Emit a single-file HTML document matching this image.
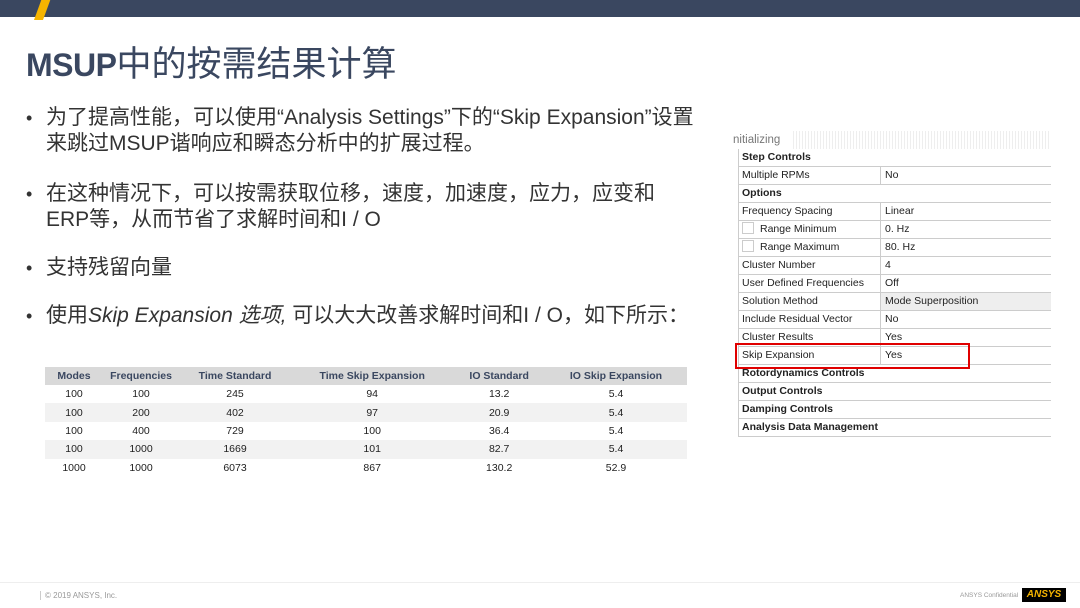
<!DOCTYPE html><html><head><meta charset="utf-8"><style>
body{margin:0;width:1080px;height:608px;position:relative;background:#fff;font-family:"Liberation Sans","Noto Sans CJK SC",sans-serif;overflow:hidden}
.top{position:absolute;left:0;top:0;width:1080px;height:17px;background:#3a4760}
.sl{position:absolute;left:38px;top:-2px;width:9px;height:22px;background:#f5b400;transform:skewX(-20deg)}
h1{position:absolute;left:26px;top:36px;margin:0;font-size:32px;font-weight:bold;color:#3a4760;letter-spacing:-0.5px;white-space:nowrap}
h1 span{font-weight:normal;font-size:35px;letter-spacing:0}
.b{position:absolute;left:26px;font-size:21px;color:#333;line-height:26px;white-space:nowrap}
.b i{font-style:italic}
.b .d{position:absolute;left:0;font-size:18px}
.b div{padding-left:20px}
table.t{position:absolute;left:45px;top:367px;width:642px;border-collapse:collapse;font-size:10.5px;color:#222;text-align:center}
.t th{background:#d9d9d9;color:#3a4760;height:18px;padding:0;font-weight:bold}
.t td{height:18.4px;padding:0}
.t tr:nth-child(odd) td{background:#f2f2f2}
.p{position:absolute;left:733px;top:131px;width:318px;font-size:10.5px;color:#222}
.p .h{height:18px;line-height:18px;color:#777;font-size:11.5px;background:repeating-linear-gradient(90deg,#fff 0 2px,#eee 2px 3px) 58px 0/100% 100% no-repeat}
.p .h span{background:#fff;padding-right:2px}
.r{height:17px;line-height:17px;border-bottom:1px solid #ccc;position:relative;margin-left:5px;border-left:1px solid #ccc}
.r .a{position:absolute;left:3px}.r .v{position:absolute;left:141px;border-left:1px solid #ccc;padding-left:4px;height:17px;right:0}
.r.g{font-weight:bold}
.cb{display:inline-block;width:10px;height:10px;border:1px solid #ccc;vertical-align:-2px;margin-right:6px}
.ft{position:absolute;top:582px;left:0;width:1080px;border-top:1px solid #eee}
</style></head><body>
<div class="top"></div><div class="sl"></div>
<h1>MSUP<span>中的按需结果计算</span></h1>
<div class="b" style="top:105px"><span class="d">•</span><div>为了提高性能，可以使用“Analysis Settings”下的“Skip Expansion”设置<br>来跳过MSUP谐响应和瞬态分析中的扩展过程。</div></div>
<div class="b" style="top:181px"><span class="d">•</span><div>在这种情况下，可以按需获取位移，速度，加速度，应力，应变和<br>ERP等，从而节省了求解时间和I / O</div></div>
<div class="b" style="top:255px"><span class="d">•</span><div>支持残留向量</div></div>
<div class="b" style="top:303px"><span class="d">•</span><div>使用<i>Skip Expansion 选项,</i> 可以大大改善求解时间和I / O，如下所示：</div></div>
<table class="t"><tr><th style="width:58px">Modes</th><th style="width:76px">Frequencies</th><th>Time Standard</th><th>Time Skip Expansion</th><th>IO Standard</th><th>IO Skip Expansion</th></tr>
<tr><td>100</td><td>100</td><td>245</td><td>94</td><td>13.2</td><td>5.4</td></tr>
<tr><td>100</td><td>200</td><td>402</td><td>97</td><td>20.9</td><td>5.4</td></tr>
<tr><td>100</td><td>400</td><td>729</td><td>100</td><td>36.4</td><td>5.4</td></tr>
<tr><td>100</td><td>1000</td><td>1669</td><td>101</td><td>82.7</td><td>5.4</td></tr>
<tr><td>1000</td><td>1000</td><td>6073</td><td>867</td><td>130.2</td><td>52.9</td></tr></table>
<div class="p"><div class="h"><span>nitializing</span></div>
<div class="r g"><span class="a">Step Controls</span></div>
<div class="r"><span class="a">Multiple RPMs</span><span class="v">No</span></div>
<div class="r g"><span class="a">Options</span></div>
<div class="r"><span class="a">Frequency Spacing</span><span class="v">Linear</span></div>
<div class="r"><span class="a"><span class="cb"></span>Range Minimum</span><span class="v">0. Hz</span></div>
<div class="r"><span class="a"><span class="cb"></span>Range Maximum</span><span class="v">80. Hz</span></div>
<div class="r"><span class="a">Cluster Number</span><span class="v">4</span></div>
<div class="r"><span class="a">User Defined Frequencies</span><span class="v">Off</span></div>
<div class="r"><span class="a">Solution Method</span><span class="v" style="background:#eee">Mode Superposition</span></div>
<div class="r"><span class="a">Include Residual Vector</span><span class="v">No</span></div>
<div class="r"><span class="a">Cluster Results</span><span class="v">Yes</span></div>
<div class="r"><span class="a">Skip Expansion</span><span class="v">Yes</span></div>
<div class="r g"><span class="a">Rotordynamics Controls</span></div>
<div class="r g"><span class="a">Output Controls</span></div>
<div class="r g"><span class="a">Damping Controls</span></div>
<div class="r g"><span class="a">Analysis Data Management</span></div>
</div>
<div style="position:absolute;left:735px;top:343px;width:231px;height:22px;border:2px solid #e00000"></div>
<div class="ft"></div>
<div style="position:absolute;left:40px;top:591px;font-size:8px;color:#999;border-left:1px solid #ccc;padding-left:4px">© 2019 ANSYS, Inc.</div>
<div style="position:absolute;left:960px;top:592px;font-size:6.5px;color:#999">ANSYS Confidential</div>
<div style="position:absolute;left:1022px;top:588px;width:44px;height:14px;background:#000;color:#f5b400;font-size:10px;font-weight:bold;text-align:center;line-height:14px;font-style:italic">ANSYS</div>
</body></html>
